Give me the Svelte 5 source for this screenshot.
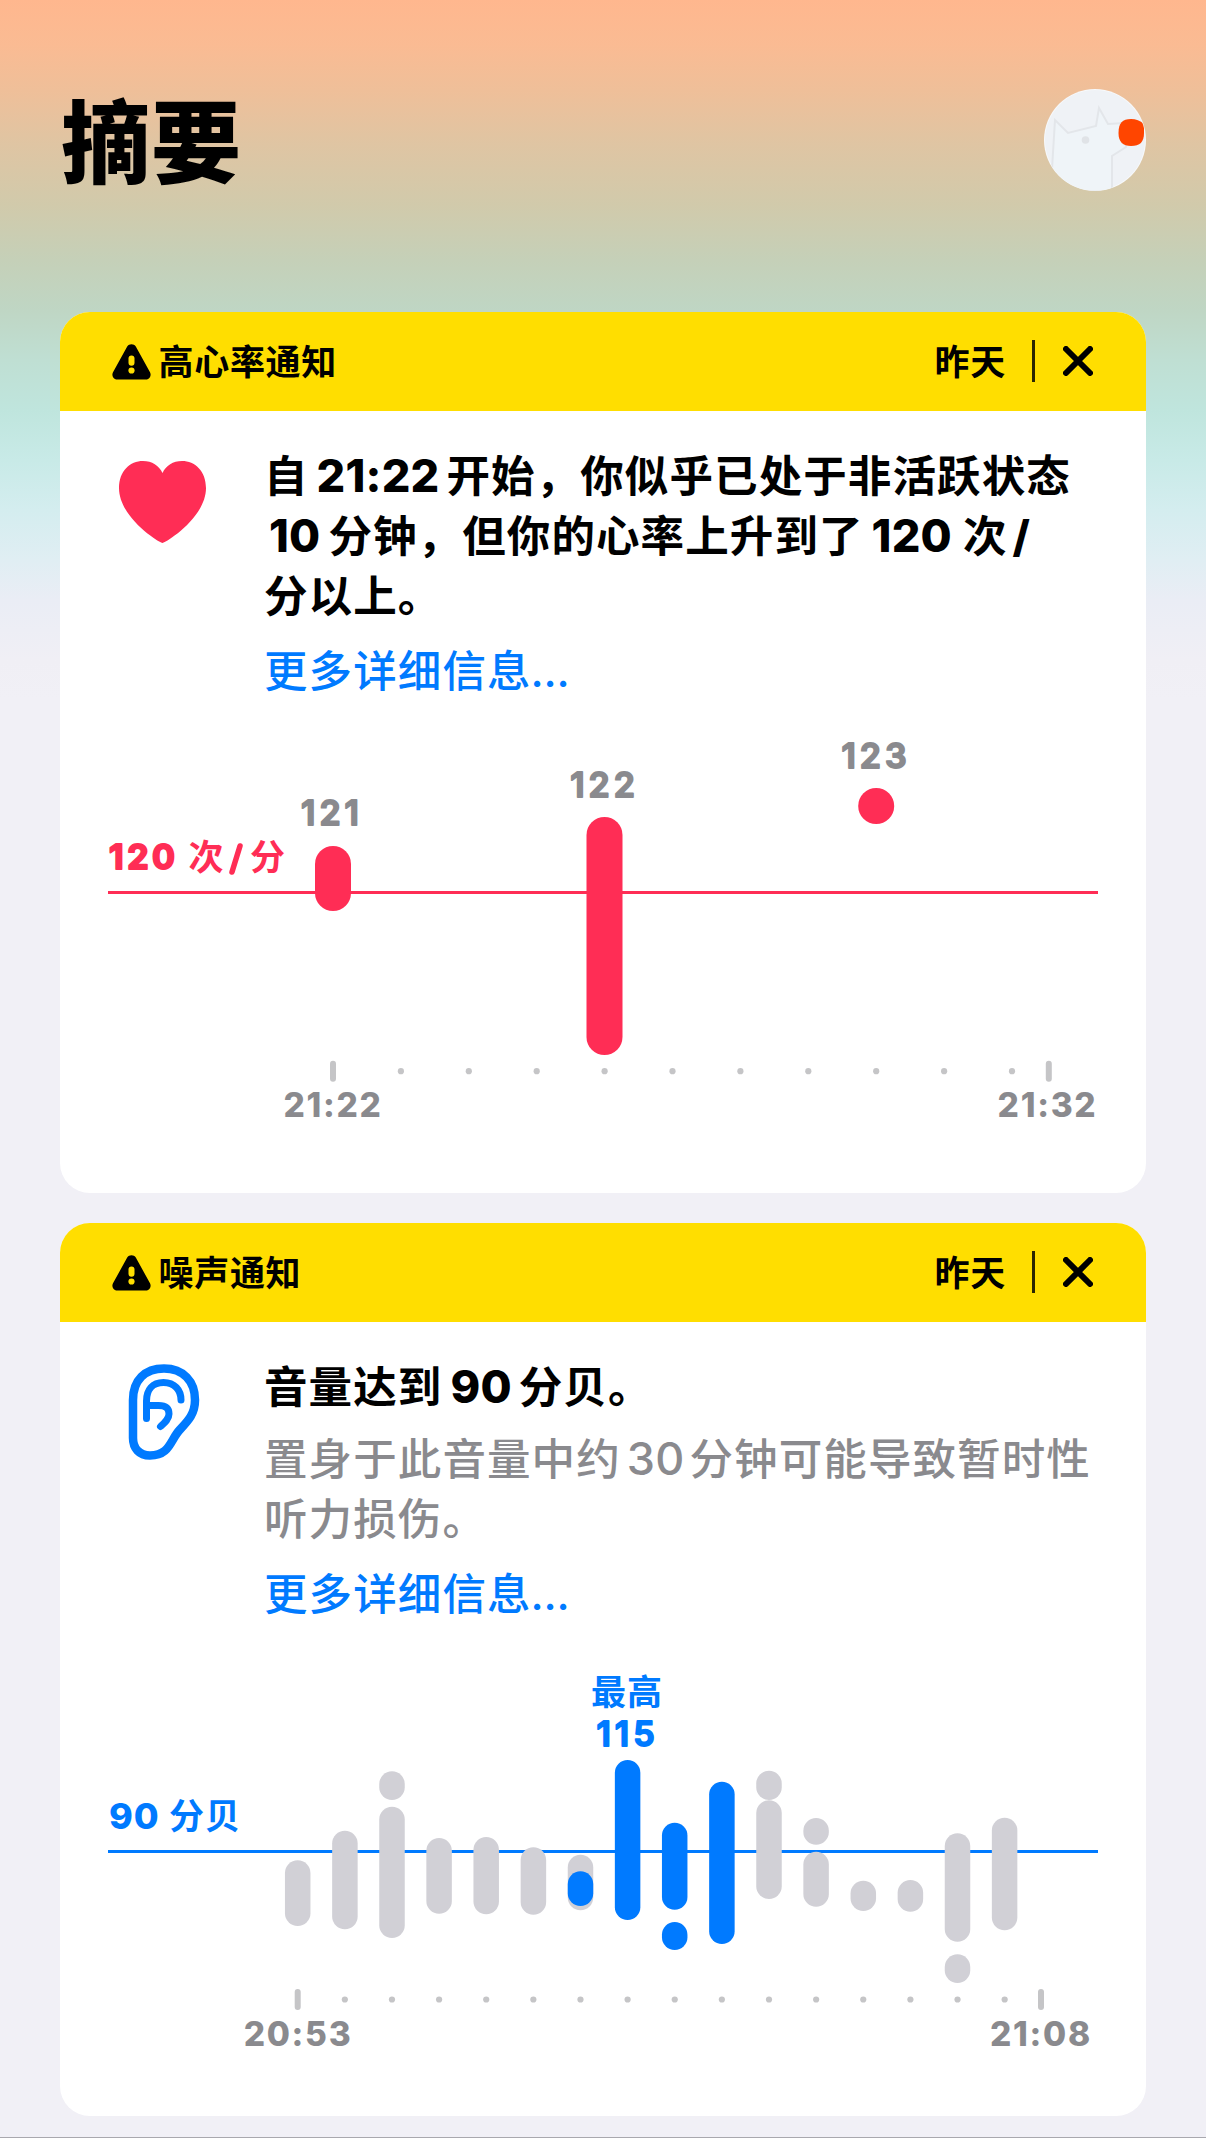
<script>
    const tick = { w: 6, h: 21 };

    // bars: [x, top, bottom, colour], in chart units
    const heart = {
        top: 720,
        height: 473,
        line: 892.5,
        color: '#ff2d55',
        barWidth: 36,
        bars: [
            [333, 846, 911, '#ff2d55'],
            [604.5, 817, 1055, '#ff2d55'],
            [876.2, 788, 824, '#ff2d55']
        ],
        start: 333,
        step: 67.9,
        dots: 10,
        end: 1048.8,
        axis: 1071.2
    };

    const grey = '#d1d0d6';
    const blue = '#007aff';

    const noise = {
        top: 1640,
        height: 476,
        line: 1851.5,
        color: blue,
        barWidth: 25.5,
        bars: [
            [297.7, 1860.3, 1926, grey],
            [344.9, 1830.7, 1929.3, grey],
            [392, 1771.3, 1800, grey],
            [392, 1806.7, 1938, grey],
            [439.1, 1838, 1913.7, grey],
            [486.2, 1837, 1914.3, grey],
            [533.4, 1847.3, 1914.7, grey],
            [580.5, 1854.7, 1910.3, grey],
            [580.5, 1871.3, 1906, blue],
            [627.6, 1760, 1920, blue],
            [674.7, 1822.7, 1909.7, blue],
            [674.7, 1922, 1950, blue],
            [721.9, 1781.7, 1944, blue],
            [769, 1770.7, 1800, grey],
            [769, 1800.3, 1899, grey],
            [816.1, 1818, 1844.7, grey],
            [816.1, 1851.7, 1906.7, grey],
            [863.3, 1880.7, 1911, grey],
            [910.4, 1880, 1911.7, grey],
            [957.5, 1833.3, 1941.7, grey],
            [957.5, 1954.3, 1983, grey],
            [1004.6, 1817.7, 1930.3, grey]
        ],
        start: 297.7,
        step: 47.13,
        dots: 15,
        end: 1041,
        axis: 1999.5
    };
</script>

{#snippet header(title)}
    <div class="banner">
        <svg class="warn" viewBox="0 0 39 36">
            <path d="M15.2 2.6a5 5 0 0 1 8.6 0l14.2 25.6a5 5 0 0 1-4.400 7.400H5.400A5 5 0 0 1 1 28.200z" />
            <path class="mark" d="M19.500 14.500v4.300" />
            <circle class="dot" cx="19.500" cy="26.500" r="3.100" />
        </svg>
        <h2>{title}</h2>
        <span class="when">昨天</span>
        <i class="divider"></i>
        <svg class="close" viewBox="0 0 30 30">
            <path d="M3 3l24 24M27 3L3 27" />
        </svg>
    </div>
{/snippet}

{#snippet plot(c)}
    <path class="limit" d="M108 {c.line}H1098" stroke={c.color} />
    {#each c.bars as [x, y1, y2, fill]}
        <rect x={x - c.barWidth / 2} y={y1} width={c.barWidth} height={y2 - y1} rx={c.barWidth / 2} {fill} />
    {/each}
    {#each [c.start, c.end] as x}
        <rect class="tick" x={x - tick.w / 2} y={c.axis - tick.h / 2} width={tick.w} height={tick.h} rx="3" />
    {/each}
    {#each Array(c.dots) as _, i}
        <circle class="tick" cx={c.start + c.step * (i + 1)} cy={c.axis} r="3.1" />
    {/each}
{/snippet}

<div class="page">
    <header>
        <h1>摘要</h1>
        <svg class="avatar" viewBox="0 0 102 102">
            <clipPath id="round"><circle cx="51" cy="51" r="50.500" /></clipPath>
            <circle cx="51" cy="51" r="51" fill="#f7f9fb" />
            <g clip-path="url(#round)">
                <rect x="1" y="1" width="100" height="100" rx="50" fill="#eff2f6" />
                <path d="M8 80L11 31L24 44L52 37L55 19L64 35L80 34L82 58L68 67V102H8z" fill="#eff4f8" stroke="#e3e6ea" stroke-width="2" />
                <circle cx="41.500" cy="51" r="3.800" fill="#e0e3e7" />
                <path d="M87 30c5 0 9 1.500 13 5v9c0 9-4 13-13 13-8 0-12.500-4-12.500-13 0-10 4-14 12.500-14z" fill="#ff4500" />
            </g>
        </svg>
    </header>

    <section class="card first">
        {@render header('高心率通知')}
        <div class="body">
            <svg class="heart" viewBox="0 0 87 82">
                <path d="M43.500 82C41 82 0 57 0 27 0 10 11 0 24 0c9 0 16 4.500 19.500 12C47 4.500 54 0 63 0c13 0 24 10 24 27 0 30-41 55-43.500 55z" />
            </svg>
            <div class="text">
                <p class="strong">自<span class="num">21:22</span>开始，你似乎已处于非活跃状态<br /><span class="num lead">10</span>分钟，但你的心率上升到了<span class="num">120</span><span class="gap">次</span><span class="slash">/</span><br />分以上。</p>
                <a class="more">更多详细信息<span class="dots">...</span></a>
            </div>
        </div>
        <svg class="chart" viewBox="60 {heart.top} 1086 {heart.height}" height={heart.height}>
            {@render plot(heart)}
            <g class="value">
                <text x="332" y="825">121</text>
                <text x="604.500" y="796.500">122</text>
                <text x="876" y="768">123</text>
            </g>
            <g class="limit-label" fill={heart.color}>
                <text class="round" x="109" y="868.500">120</text>
                <text x="188.500" y="870">次</text>
                <path d="M240 846L232 872" stroke={heart.color} stroke-width="5.500" stroke-linecap="round" />
                <text x="250" y="870">分</text>
            </g>
            <g class="time">
                <text x="333" y="1117">21:22</text>
                <text x="1047.500" y="1117">21:32</text>
            </g>
        </svg>
    </section>

    <section class="card second">
        {@render header('噪声通知')}
        <div class="body">
            <svg class="ear" viewBox="0 0 72 96">
                <path class="outer" d="M5 36C5 16 17 4.500 36 4.500S67 17 67 36c0 14-7 21-15 29.500-10 10.500-10 26-30 26C11 91.500 5 84 5 74z" />
                <path d="M18.500 54.500V37c0-11 6-18.500 17-18.500S53 26 53 36" />
                <path d="M18.500 41.500h12c7 0 10.500 2.500 10.500 8.500 0 5-4 8.500-8.500 12.500" />
            </svg>
            <div class="text">
                <p class="strong">音量达到<span class="num">90</span>分贝。</p>
                <p class="note">置身于此音量中约<span class="num">30</span>分钟可能导致暂时性<br />听力损伤。</p>
                <a class="more">更多详细信息<span class="dots">...</span></a>
            </div>
        </div>
        <svg class="chart" viewBox="60 {noise.top} 1086 {noise.height}" height={noise.height}>
            {@render plot(noise)}
            <g class="limit-label" fill={noise.color}>
                <text class="plain" x="109" y="1828.500">90</text>
                <text x="169" y="1829">分贝</text>
                <text class="peak" x="627" y="1705">最高</text>
            </g>
            <g class="value top">
                <text x="627.500" y="1745.500">115</text>
            </g>
            <g class="time">
                <text x="298" y="2045.500">20:53</text>
                <text x="1041" y="2045.500">21:08</text>
            </g>
        </svg>
    </section>
    <div class="edge"></div>
</div>

<style>
    :global(body) {
        margin: 0;
        background: #f1f0f6;
    }

    .page {
        box-sizing: border-box;
        height: 2138px;
        overflow: hidden;
        display: flex;
        flex-direction: column;
        padding: 0 60px;
        font-family: Inter, "Noto Sans CJK SC", sans-serif;
        background: linear-gradient(#ffb78e 0, #fabb93 45px, #efbf99 90px, #dfc5a3 145px, #d1caab 205px, #c5d0b8 260px, #bfd6c4 310px, #bfdfd3 360px, #bfe5dd 410px, #c8eae7 460px, #d4edef 510px, #e0eef3 560px, #eaedf5 600px, #f0eff5 660px, #f1f0f6 700px);
    }

    header {
        display: flex;
        justify-content: space-between;
        height: 312px;
    }

    h1 {
        margin: 79px 0 0 1px;
        font-size: 90px;
        line-height: 130px;
        font-weight: 900;
        letter-spacing: 0;
    }

    .avatar {
        width: 102px;
        height: 102px;
        margin-top: 89px;
    }

    .card {
        display: flex;
        flex-direction: column;
        border-radius: 30px;
        overflow: hidden;
        background: #fff;
        flex: none;
    }

    .first {
        height: 881px;
        margin-bottom: 30px;
    }

    .second {
        height: 893px;
    }

    .edge {
        height: 1px;
        margin: 21px -60px 0;
        background: #a9a8ae;
    }

    .banner {
        display: flex;
        align-items: center;
        height: 99px;
        padding: 0 53px 0 51.500px;
        background: #ffde00;
        flex: none;
    }

    .warn {
        width: 39px;
        height: 36px;
        margin-right: 8px;
    }

    .mark {
        stroke: #ffde00;
        stroke-width: 6;
        stroke-linecap: round;
    }

    .dot {
        fill: #ffde00;
    }

    h2,
    .when {
        margin: 0;
        font-size: 35px;
        line-height: 50px;
        font-weight: 700;
        letter-spacing: 0.700px;
    }

    .when {
        margin-left: auto;
    }

    .divider {
        width: 3px;
        height: 42px;
        margin: 0 28px 2px 26px;
        background: #2b2600;
    }

    .close {
        width: 30px;
        height: 30px;
        margin-bottom: 1px;
        stroke: #000;
        stroke-width: 6;
        stroke-linecap: round;
    }

    .body {
        display: flex;
        flex: none;
    }

    .first .body {
        height: 309px;
    }

    .second .body {
        height: 318px;
    }

    .heart {
        width: 87px;
        height: 82px;
        margin: 50px 58px 0 59px;
        fill: #ff2d55;
    }

    .ear {
        width: 72px;
        height: 96px;
        margin: 42px 64px 0 68px;
        fill: none;
        stroke: #007aff;
        stroke-width: 7;
        stroke-linecap: round;
    }

    .outer {
        stroke-width: 8.500;
    }

    .text {
        padding-top: 34.500px;
        font-size: 43.500px;
        line-height: 60.300px;
        letter-spacing: 1.100px;
        white-space: nowrap;
    }

    p {
        margin: 0;
    }

    .strong {
        font-weight: 700;
    }

    .note {
        margin-top: 12px;
        color: #8a8a8e;
    }

    .more {
        display: block;
        margin-top: 14.500px;
        color: #007aff;
    }

    .num {
        margin: 0 7px 0 8px;
        font-size: 45px;
        line-height: 1;
        letter-spacing: 0.200px;
    }

    .strong .num {
        font-weight: 800;
    }

    .note .num {
        margin: 0 5px 0 6px;
    }

    .strong .lead {
        margin-left: 5px;
        margin-right: 8px;
    }

    .gap {
        margin-left: 4px;
    }

    .slash {
        margin-left: 5px;
        font-weight: 800;
    }

    .dots {
        margin-left: -1px;
        letter-spacing: -0.300px;
    }

    .note,
    .more {
        font-weight: 500;
    }

    .chart {
        display: block;
        width: 1086px;
        flex: none;
    }

    .limit {
        stroke-width: 3;
    }

    .tick {
        fill: #c5c5c7;
    }

    .value text,
    .time text,
    .peak {
        text-anchor: middle;
    }

    .value text {
        fill: #8a8a8e;
        stroke: #8a8a8e;
        stroke-width: 1.800;
        stroke-linejoin: round;
        font-size: 34px;
        font-weight: 600;
        letter-spacing: 4px;
    }

    .value.top text {
        fill: #007aff;
        stroke: #007aff;
    }

    .time text {
        fill: #8a8a8e;
        font-size: 33.500px;
        font-weight: 800;
        letter-spacing: 1.700px;
    }

    .limit-label text {
        font-size: 35px;
        font-weight: 700;
        letter-spacing: 1px;
    }

    .limit-label .round {
        font-size: 34px;
        stroke: #ff2d55;
        stroke-width: 2;
        stroke-linejoin: round;
        letter-spacing: 3.500px;
    }

    .limit-label .plain {
        font-size: 36px;
        font-weight: 800;
    }
</style>
